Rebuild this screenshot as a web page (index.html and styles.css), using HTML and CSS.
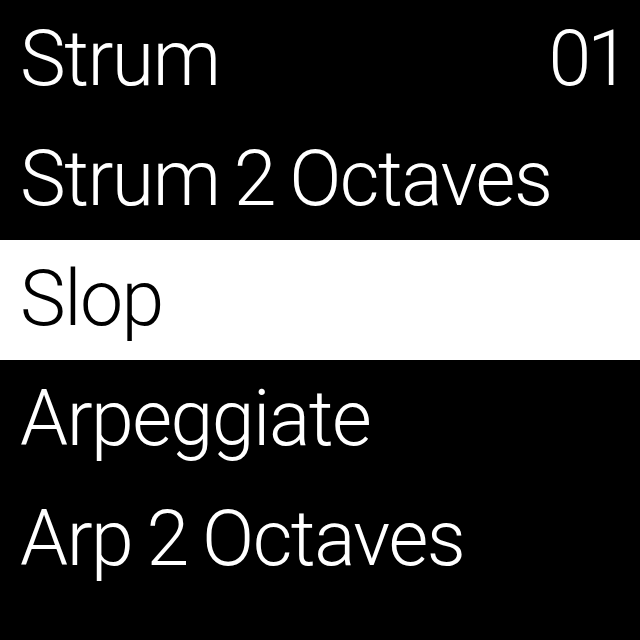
FILE: index.html
```html
<!DOCTYPE html>
<html>
<head>
<meta charset="utf-8">
<link rel="stylesheet" href="styles.css">
</head>
<body>
<div class="screen">
  <div class="row"><span class="label">Strum</span><span class="num">01</span></div>
  <div class="row"><span class="label">Strum 2 Octaves</span></div>
  <div class="row selected"><span class="label">Slop</span></div>
  <div class="row"><span class="label">Arpeggiate</span></div>
  <div class="row"><span class="label">Arp 2 Octaves</span></div>
</div>
</body>
</html>
```
FILE: styles.css
```css
html, body {
  margin: 0;
  padding: 0;
  background: #000;
}
.screen {
  width: 640px;
  height: 640px;
  background: #000;
  color: #fff;
  font-family: Roboto, "Liberation Sans", sans-serif;
  font-weight: 300;
  font-size: 77px;
  overflow: hidden;
}
.row {
  display: flex;
  justify-content: space-between;
  align-items: baseline;
  height: 120px;
  line-height: 118px;
  padding: 0 20px;
  white-space: nowrap;
}
.label {
  letter-spacing: -1.5px;
  word-spacing: -3px;
}
.num {
  letter-spacing: -4px;
  margin-right: -6px;
}
.selected {
  background: #fff;
  color: #000;
}
```
